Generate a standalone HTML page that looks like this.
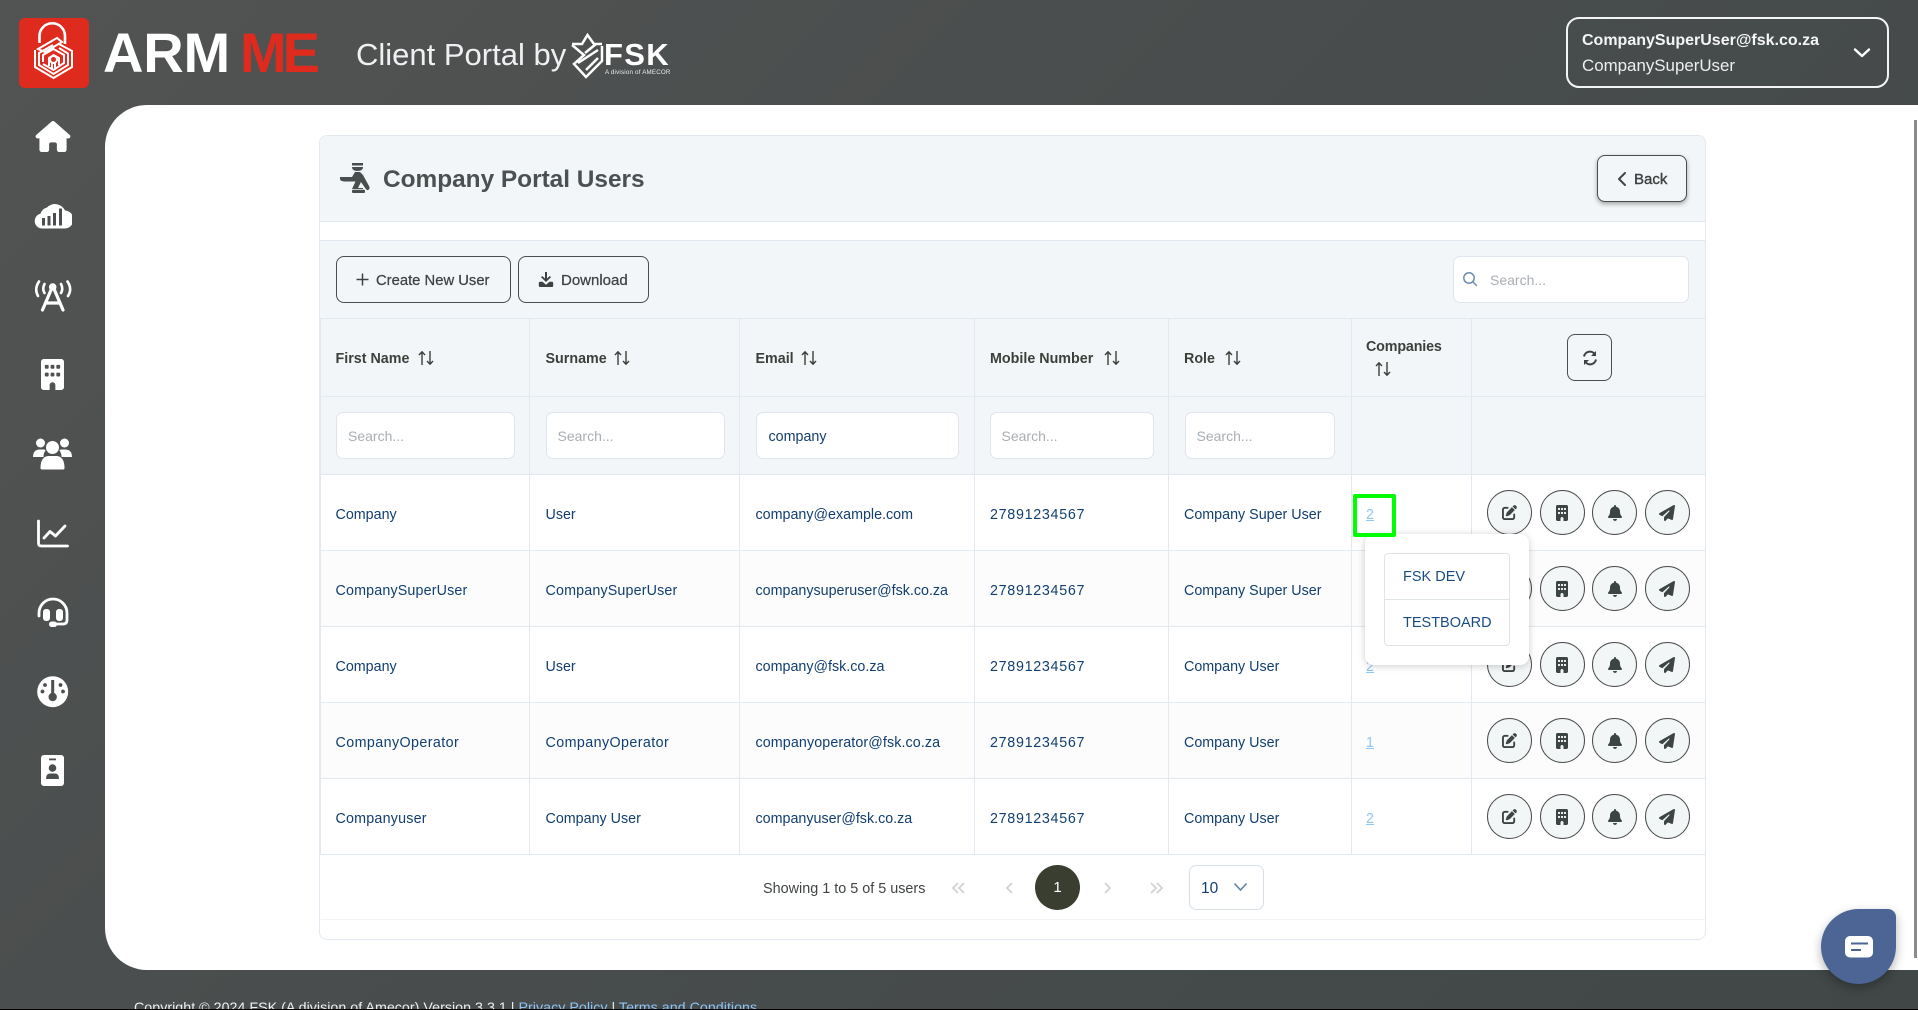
<!DOCTYPE html>
<html lang="en"><head><meta charset="utf-8"><title>Company Portal Users</title>
<style>
*{box-sizing:border-box}
html,body{margin:0;padding:0;width:1918px;height:1010px;overflow:hidden}
body{position:relative;background:linear-gradient(135deg,#525453 0%,#484c4c 50%,#414747 100%);font-family:"Liberation Sans",Arial,sans-serif;color:#3b403f}
.a{position:absolute;white-space:nowrap}
.panel{position:absolute;left:105px;top:105px;width:1813px;height:865px;background:#fff;border-radius:42px 0 0 42px}
.card{position:absolute;left:319px;top:135px;width:1387px;height:805px;background:#fff;border:1px solid #e2e9f0;border-radius:8px;overflow:hidden}
.chead{position:absolute;left:0;top:0;width:100%;height:86px;background:#f3f6f8;border-bottom:1px solid #e2e9f0}
.tbar{position:absolute;left:0;top:104px;width:100%;height:79px;background:#f3f6f8;border-top:1px solid #e2e9f0}
table{position:absolute;left:320px;top:318px;width:1385px;border-collapse:collapse;table-layout:fixed;font-size:14.3px}
td,th{border:1px solid #e2e9f0;padding:0 0 0 15.5px;text-align:left;overflow:visible;white-space:nowrap}
th{background:#f3f6f8;height:78px;font-weight:bold;font-size:14.3px;color:#3b403a;padding-top:2px}
td:first-child,th:first-child{padding-left:14.5px}
td:nth-child(4),th:nth-child(4),td:nth-child(5),th:nth-child(5){padding-left:15px}
td:nth-child(6){padding-left:14px}
tr.f td{background:#f3f6f8;height:78px;padding-top:0}
tr.f td:nth-child(n){padding-left:15.5px}
tr.f td:first-child{padding-left:15px}
tr.f td:nth-child(4){padding-left:14.5px}
tr.r td{height:76px;color:#123f70;padding-top:4px;background:#fff}
tr.r:nth-child(odd) td{background:#fcfcfc}
tr.r td:nth-child(4){letter-spacing:.7px}
tr.r td.n{padding:0 0 0 15px}
td a{color:#8ec5f6;text-decoration:underline}
.ar{display:inline-block;width:16px;height:14px;margin-left:9px;vertical-align:-2px}
.inp{display:block;height:47px;background:#fff;border:1px solid #dfe5ec;border-radius:7px;font-size:14px;color:#a9aeb3;line-height:47px;padding-left:11px}
.inp b{font-weight:normal;font-size:14.3px;color:#123f70}
.acts{display:flex;gap:7.5px;padding-left:0}
.c{width:45px;height:45px;border:1.4px solid #4a4d4c;border-radius:50%;background:#f3f6f7;display:flex;align-items:center;justify-content:center}
.c svg{fill:#3d4444;display:block}
.btn{position:absolute;height:47px;border:1.3px solid #4a4d4c;border-radius:8px;background:#f3f6f8;font-size:15px;color:#3e4342;-webkit-text-stroke:.25px #3e4342}
.btn svg{position:absolute;display:block}
.btn span{position:absolute;top:15px;line-height:18px;white-space:nowrap}
.pop{position:absolute;left:1365px;top:534px;width:164px;height:131px;background:#fff;border-radius:9px;box-shadow:0 1px 8px rgba(0,0,0,.2)}
.pop div.l{position:absolute;left:19px;top:19px;width:126px;height:93px;border:1px solid #dfe4ea;border-radius:4px;font-size:14.500px;color:#1a4c84}
.pop .l span{position:absolute;left:18px}
.green{position:absolute;left:1353px;top:494px;width:43px;height:43px;border:4.5px solid #0f0;border-radius:2px}
</style></head><body>
<svg width="0" height="0" style="position:absolute">
<symbol id="i-sort" viewBox="0 0 16 14"><path d="M4 14V1M1 4L4 .8L7 4M12 0V13M9 10L12 13.200L15 10" fill="none" stroke="#3b403a" stroke-width="1.400"/></symbol>
<symbol id="i-edit" viewBox="0 0 512 512"><path d="M471.600 21.700c-21.900-21.900-57.300-21.900-79.200 0L362.300 51.700l97.900 97.900 30.100-30.100c21.900-21.900 21.900-57.300 0-79.200L471.600 21.700zm-299.200 220c-6.100 6.100-10.800 13.600-13.500 21.900l-29.600 88.800c-2.900 8.600-.6 18.100 5.800 24.600s15.900 8.700 24.600 5.800l88.800-29.600c8.200-2.700 15.700-7.400 21.900-13.500L437.700 172.300 339.700 74.300 172.400 241.700zM96 64C43 64 0 107 0 160V416c0 53 43 96 96 96H352c53 0 96-43 96-96V320c0-17.700-14.300-32-32-32s-32 14.300-32 32v96c0 17.700-14.300 32-32 32H96c-17.700 0-32-14.300-32-32V160c0-17.700 14.300-32 32-32h96c17.700 0 32-14.300 32-32s-14.300-32-32-32H96z"/></symbol>
<symbol id="i-bld" viewBox="0 0 384 512"><path d="M48 0C21.500 0 0 21.500 0 48V464c0 26.500 21.500 48 48 48h96V432c0-26.500 21.500-48 48-48s48 21.500 48 48v80h96c26.500 0 48-21.500 48-48V48c0-26.500-21.500-48-48-48H48zM64 240c0-8.800 7.200-16 16-16h32c8.800 0 16 7.200 16 16v32c0 8.800-7.200 16-16 16H80c-8.800 0-16-7.200-16-16V240zm112-16h32c8.800 0 16 7.200 16 16v32c0 8.800-7.200 16-16 16H176c-8.800 0-16-7.200-16-16V240c0-8.800 7.200-16 16-16zm80 16c0-8.800 7.200-16 16-16h32c8.800 0 16 7.200 16 16v32c0 8.800-7.200 16-16 16H272c-8.800 0-16-7.200-16-16V240zM80 96h32c8.800 0 16 7.200 16 16v32c0 8.800-7.200 16-16 16H80c-8.800 0-16-7.200-16-16V112c0-8.800 7.200-16 16-16zm80 16c0-8.800 7.200-16 16-16h32c8.800 0 16 7.200 16 16v32c0 8.800-7.200 16-16 16H176c-8.800 0-16-7.200-16-16V112zM272 96h32c8.800 0 16 7.200 16 16v32c0 8.800-7.200 16-16 16H272c-8.800 0-16-7.200-16-16V112c0-8.800 7.200-16 16-16z"/></symbol>
<symbol id="i-bell" viewBox="0 0 448 512"><path d="M224 0c-17.700 0-32 14.300-32 32V51.200C119 66 64 130.600 64 208v18.800c0 47-17.300 92.400-48.500 127.600l-7.400 8.300c-8.400 9.400-10.400 22.900-5.300 34.400S19.400 416 32 416H416c12.600 0 24-7.400 29.200-18.900s3.100-25-5.300-34.400l-7.400-8.300C401.300 319.200 384 273.900 384 226.800V208c0-77.400-55-142-128-156.800V32c0-17.700-14.300-32-32-32zm45.300 493.300c12-12 18.700-28.300 18.700-45.300H224 160c0 17 6.700 33.300 18.700 45.300s28.300 18.700 45.300 18.700s33.300-6.700 45.300-18.700z"/></symbol>
<symbol id="i-send" viewBox="0 0 512 512"><path d="M498.100 5.600c10.100 7 15.400 19.100 13.500 31.200l-64 416c-1.500 9.700-7.400 18.200-16 23s-18.900 5.400-28 1.600L284 427.700l-68.500 74.100c-8.900 9.700-22.900 12.900-35.200 8.100S160 493.200 160 480V396.400c0-4 1.500-7.800 4.200-10.700L331.800 202.800c5.800-6.300 5.600-16-.4-22s-15.700-6.400-22-.7L106 360.800 17.700 316.600C7.100 311.300 .3 300.700 0 288.900s5.900-22.800 16.100-28.700l448-256c10.700-6.100 23.900-5.500 34 1.400z"/></symbol>
</svg>

<!-- header logo -->
<svg class="a" style="left:15px;top:15px" width="80" height="76" viewBox="0 0 80 76">
<rect x="4" y="3" width="70" height="70" rx="6" fill="#df2a1e"/>
<g fill="none" stroke="#fff" stroke-width="2" stroke-linejoin="miter">
<path d="M24.500 28V21A12.700 12.700 0 0 1 50 21V29" stroke-width="2.600"/>
<path d="M23 34L42 23L47 27L30 37Z"/>
<path d="M44 29L57 36V52L38.500 63L20 52V35"/>
<path d="M44 33L53 38.500V50L38.500 59L24 50V38L38 30"/>
<path d="M28 47V40L38.500 34L49 40V48L38.500 55L28 49"/>
<path d="M34 51V43L38.500 40L44 43V50"/>
<circle cx="38.500" cy="44.500" r="3.500"/><path d="M37 48V54M40 48V54"/>
</g></svg>
<div class="a" style="left:103px;top:20px;font-weight:bold;font-size:56px;line-height:66px;color:#fff;letter-spacing:-.2px">ARM</div>
<div class="a" style="left:240px;top:20px;font-weight:bold;font-size:56px;line-height:66px;color:#df2a1e;letter-spacing:-4px">ME</div>
<div class="a" style="left:356px;top:36px;font-size:31px;line-height:38px;color:#eef0f2">Client Portal by</div>
<svg class="a" style="left:565px;top:30px" width="44" height="52" viewBox="0 0 44 52">
<g fill="none" stroke="#fff" stroke-width="2.500">
<path d="M7 14H17L22.500 5L29 14H37M7 15L19 25L9 34L21 47L37 31V16"/>
<path d="M20 23L31 14M13 33L33 20M21 40L33 28"/></g>
</svg>
<div class="a" style="left:604px;top:37px;font-weight:bold;font-size:31px;line-height:36px;color:#fff;letter-spacing:1.300px">FSK</div>
<div class="a" style="left:605px;top:68px;font-size:6.200px;line-height:9px;color:#e9ebec;letter-spacing:.2px">A division of AMECOR</div>

<!-- user box -->
<div class="a" style="left:1566px;top:17px;width:323px;height:71px;border:2px solid #f2f4f5;border-radius:13px"></div>
<div class="a" style="left:1582px;top:31px;font-weight:bold;font-size:16px;line-height:20px;color:#f4f5f6">CompanySuperUser@fsk.co.za</div>
<div class="a" style="left:1582px;top:56px;font-size:16.900px;line-height:20px;color:#eceeef">CompanySuperUser</div>
<svg class="a" style="left:1853px;top:46px" width="18" height="14" viewBox="0 0 18 14"><path d="M2 3.500L9 10L16 3.500" fill="none" stroke="#fff" stroke-width="2.400" stroke-linecap="round" stroke-linejoin="round"/></svg>

<!-- sidebar icons -->
<svg class="a" style="left:35px;top:121px" width="36" height="31" viewBox="0 0 576 512" fill="#fff"><path d="M575.8 255.500c0 18-15 32.100-32 32.100h-32l.7 160.200c0 2.700-.2 5.400-.5 8.100V472c0 22.100-17.900 40-40 40H456c-1.100 0-2.200 0-3.300-.1c-1.400 .1-2.800 .1-4.200 .1H416 392c-22.100 0-40-17.900-40-40V448 384c0-17.700-14.300-32-32-32H256c-17.700 0-32 14.300-32 32v64 24c0 22.100-17.900 40-40 40H160 128.100c-1.500 0-3-.1-4.500-.2c-1.200 .1-2.400 .2-3.600 .2H104c-22.100 0-40-17.900-40-40V360c0-.9 0-1.900 .1-2.800V287.600H32c-18 0-32-14-32-32.100c0-9 3-17 10-24L266.400 8c7-7 15-8 22-8s15 2 21 7L564.800 231.500c8 7 12 15 11 24z"/></svg>
<svg class="a" style="left:34px;top:201px" width="38" height="28" viewBox="0 0 38 28"><path d="M8 27.500A7.500 7.500 0 0 1 6.500 12.700A9 9 0 0 1 13 6.500A11 11 0 0 1 31 9.500A8.500 8.500 0 0 1 30 27.500Z" fill="#fff"/><g fill="#4b4e4e"><rect x="8" y="17" width="3" height="7.500"/><rect x="13.500" y="15" width="3" height="9.500"/><rect x="19" y="12" width="3" height="12.500"/><rect x="25" y="7.500" width="3" height="17"/></g></svg>
<svg class="a" style="left:34px;top:279px" width="38" height="33" viewBox="0 0 38 33" fill="none" stroke="#fff" stroke-width="3.200" stroke-linecap="round"><path d="M5 2.500Q0 10 4 17M33.500 2.500Q38.500 10 34 17M10.500 5Q8 10 10.500 14M27 5Q29.500 10 27 14" stroke-width="2.600"/><circle cx="18.700" cy="8" r="3.800" fill="#fff" stroke="none"/><path d="M17 11L8.500 31M20.500 11L29 31M12 24H26"/></svg>
<svg class="a" style="left:41px;top:359px" width="23" height="31" viewBox="0 0 384 512" preserveAspectRatio="none" fill="#fff"><use href="#i-bld"/></svg>
<svg class="a" style="left:33px;top:438px" width="39" height="33" viewBox="0 0 39 33" fill="#fff"><circle cx="7.500" cy="5" r="4.500"/><circle cx="31.500" cy="5" r="4.500"/><path d="M0 19Q0 11.500 7 11.500H11Q12 11.500 12.500 12.500Q10.500 15 10.500 19Z"/><path d="M39 19Q39 11.500 32 11.500H28Q27 11.500 26.500 12.500Q28.500 15 28.500 19Z"/><circle cx="19.500" cy="9.500" r="6.500"/><path d="M7.500 30Q7.500 19 15 18H24Q31.500 19 31.500 30Q31.500 31.500 30 31.500H9Q7.500 31.500 7.500 30Z"/></svg>
<svg class="a" style="left:36px;top:519px" width="34" height="29" viewBox="0 0 34 29" fill="none" stroke="#fff" stroke-width="2.800" stroke-linecap="round" stroke-linejoin="round"><path d="M2.500 2V24Q2.500 27 5.500 27H31.500"/><path d="M8 19L14 12.500L19.500 17L29 7"/></svg>
<svg class="a" style="left:36px;top:596px" width="34" height="33" viewBox="0 0 34 33"><path d="M3 20V17A14 14 0 0 1 31 17V24Q31 28 27 28H18" fill="none" stroke="#fff" stroke-width="2.800" stroke-linecap="round"/><rect x="7" y="13" width="7" height="12" rx="3" fill="#fff"/><rect x="20" y="13" width="7" height="12" rx="3" fill="#fff"/><rect x="13" y="25.500" width="8" height="5.500" rx="2.700" fill="#fff"/></svg>
<svg class="a" style="left:37px;top:676px" width="32" height="32" viewBox="0 0 32 32"><circle cx="15.700" cy="15.700" r="15.500" fill="#fff"/><g fill="#4a4e4e"><rect x="14.200" y="4" width="3" height="14"/><circle cx="15.700" cy="21" r="4.200"/><circle cx="8" cy="9" r="1.900"/><circle cx="23.500" cy="9" r="1.900"/><circle cx="5.500" cy="15.500" r="1.900"/><circle cx="26" cy="15.500" r="1.900"/></g></svg>
<svg class="a" style="left:41px;top:755px" width="23" height="31" viewBox="0 0 23 31"><rect width="23" height="31" rx="3" fill="#fff"/><g fill="#4a4e4e"><rect x="8" y="3.500" width="7" height="1.800"/><circle cx="11.500" cy="13" r="3.800"/><path d="M5 24Q5 18.500 9 18.500H14Q18 18.500 18 24Z"/></g></svg>

<div class="panel"></div>
<div class="card"><div class="chead"></div><div class="tbar"></div></div>

<!-- card header -->
<svg class="a" style="left:339px;top:162px" width="33" height="31" viewBox="0 0 33 31" fill="#484d4d"><path d="M13 1H24V3.500H13ZM13 5H24Q24 9 18.500 9Q13 9 13 5Z"/><path d="M1 15H13L16 10H21L24 13L30 24Q31.500 27 29 28Q27.500 28.500 26.500 26.500L22 20L19 26H24Q24 26 24 27H13L16.500 19.500H5Q1 19 1 17Z"/><rect x="13" y="27.700" width="13" height="3.300" rx="1"/></svg>
<div class="a" style="left:383px;top:164px;font-weight:bold;font-size:24.400px;line-height:32px;color:#4b5050">Company Portal Users</div>
<div class="btn" style="left:1597px;top:155px;width:90px;box-shadow:0 2px 5px rgba(0,0,0,.35)"><svg style="left:19px;top:15px" width="10" height="16" viewBox="0 0 10 16"><path d="M8 2L2 8L8 14" fill="none" stroke="#3e4342" stroke-width="2" stroke-linecap="round" stroke-linejoin="round"/></svg><span style="left:36px;-webkit-text-stroke:.4px #3e4342;font-size:15px">Back</span></div>

<!-- toolbar -->
<div class="btn" style="left:336px;top:256px;width:175px"><svg style="left:19px;top:16px" width="13" height="13" viewBox="0 0 13 13"><path d="M6.500 .5V12.500M.5 6.500H12.500" stroke="#3e4342" stroke-width="1.500"/></svg><span style="left:39px;font-size:14.800px">Create New User</span></div>
<div class="btn" style="left:518px;top:256px;width:131px"><svg style="left:19px;top:15px" width="16" height="16" viewBox="0 0 16 16" fill="#3e4342"><path d="M7 0H9V6.500L11.800 4L13 5.300L8 10L3 5.300L4.200 4L7 6.500Z"/><path d="M.8 11Q.8 9.700 2 9.700H4.600L8 12.700L11.400 9.700H14Q15.200 9.700 15.200 11V14Q15.200 15 14 15H2Q.8 15 .8 14Z"/></svg><span style="left:42px">Download</span></div>
<div class="a" style="left:1453px;top:256px;width:236px;height:47px;background:#fff;border:1px solid #dfe5ec;border-radius:7px"></div>
<svg class="a" style="left:1462px;top:271px" width="16" height="16" viewBox="0 0 16 16" fill="none" stroke="#6f8db0" stroke-width="1.500" stroke-linecap="round"><circle cx="7" cy="7" r="5.200"/><path d="M11 11L14.500 14.500"/></svg>
<div class="a" style="left:1490px;top:271px;font-size:14px;line-height:18px;color:#a9aeb3">Search...</div>

<table>
<colgroup><col style="width:209px"><col style="width:210px"><col style="width:235px"><col style="width:194px"><col style="width:183px"><col style="width:120px"><col style="width:234px"></colgroup>
<thead>
<tr>
<th>First Name<svg class="ar"><use href="#i-sort"/></svg></th>
<th>Surname<svg class="ar" style="margin-left:7.500px"><use href="#i-sort"/></svg></th>
<th>Email<svg class="ar" style="margin-left:7.500px"><use href="#i-sort"/></svg></th>
<th>Mobile Number<svg class="ar" style="margin-left:11px"><use href="#i-sort"/></svg></th>
<th>Role<svg class="ar" style="margin-left:10px"><use href="#i-sort"/></svg></th>
<th style="line-height:24px;padding-left:14px;letter-spacing:-.15px">Companies<br><svg class="ar" style="vertical-align:-1px"><use href="#i-sort"/></svg></th>
<th style="padding:0"><div style="width:45px;height:47px;margin-left:95px;border:1.300px solid #4a4d4c;border-radius:8px;display:flex;align-items:center;justify-content:center"><svg width="16" height="16" viewBox="0 0 16 16" fill="none" stroke="#3e4342" stroke-width="2"><path d="M2 6.500A6 6 0 0 1 13 4.500M14 9.500A6 6 0 0 1 3 11.500"/><path d="M14 1V6H9ZM2 15V10H7Z" fill="#3e4342" stroke="none"/></svg></div></th>
</tr>
</thead>
<tbody>
<tr class="f"><td><div class="inp" style="width:179px">Search...</div></td><td><div class="inp" style="width:179px">Search...</div></td><td><div class="inp" style="width:203px;padding-left:12px"><b>company</b></div></td><td><div class="inp" style="width:164px">Search...</div></td><td><div class="inp" style="width:150px">Search...</div></td><td></td><td></td></tr>
<tr class="r"><td>Company</td><td>User</td><td>company@example.com</td><td>27891234567</td><td>Company Super User</td><td><a>2</a></td><td class="n"><div class="acts"><div class="c"><svg width="15" height="15"><use href="#i-edit"/></svg></div><div class="c"><svg width="12" height="16"><use href="#i-bld"/></svg></div><div class="c"><svg width="14" height="16"><use href="#i-bell"/></svg></div><div class="c"><svg width="16" height="16"><use href="#i-send"/></svg></div></div></td></tr>
<tr class="r"><td style="letter-spacing:.15px">CompanySuperUser</td><td style="letter-spacing:.15px">CompanySuperUser</td><td>companysuperuser@fsk.co.za</td><td>27891234567</td><td>Company Super User</td><td><a>2</a></td><td class="n"><div class="acts"><div class="c"><svg width="15" height="15"><use href="#i-edit"/></svg></div><div class="c"><svg width="12" height="16"><use href="#i-bld"/></svg></div><div class="c"><svg width="14" height="16"><use href="#i-bell"/></svg></div><div class="c"><svg width="16" height="16"><use href="#i-send"/></svg></div></div></td></tr>
<tr class="r"><td>Company</td><td>User</td><td>company@fsk.co.za</td><td>27891234567</td><td>Company User</td><td><a>2</a></td><td class="n"><div class="acts"><div class="c"><svg width="15" height="15"><use href="#i-edit"/></svg></div><div class="c"><svg width="12" height="16"><use href="#i-bld"/></svg></div><div class="c"><svg width="14" height="16"><use href="#i-bell"/></svg></div><div class="c"><svg width="16" height="16"><use href="#i-send"/></svg></div></div></td></tr>
<tr class="r"><td style="letter-spacing:.4px">CompanyOperator</td><td style="letter-spacing:.4px">CompanyOperator</td><td style="letter-spacing:.1px">companyoperator@fsk.co.za</td><td>27891234567</td><td>Company User</td><td><a>1</a></td><td class="n"><div class="acts"><div class="c"><svg width="15" height="15"><use href="#i-edit"/></svg></div><div class="c"><svg width="12" height="16"><use href="#i-bld"/></svg></div><div class="c"><svg width="14" height="16"><use href="#i-bell"/></svg></div><div class="c"><svg width="16" height="16"><use href="#i-send"/></svg></div></div></td></tr>
<tr class="r"><td style="letter-spacing:.2px">Companyuser</td><td>Company User</td><td>companyuser@fsk.co.za</td><td>27891234567</td><td>Company User</td><td><a>2</a></td><td class="n"><div class="acts"><div class="c"><svg width="15" height="15"><use href="#i-edit"/></svg></div><div class="c"><svg width="12" height="16"><use href="#i-bld"/></svg></div><div class="c"><svg width="14" height="16"><use href="#i-bell"/></svg></div><div class="c"><svg width="16" height="16"><use href="#i-send"/></svg></div></div></td></tr>
</tbody></table>

<!-- popover -->
<div class="pop"><div class="l"><span style="top:15px">FSK DEV</span><div style="position:absolute;left:0;right:0;top:45px;height:1px;background:#dfe4ea"></div><span style="top:61px">TESTBOARD</span></div></div>
<div class="green"></div>

<!-- pagination -->
<div class="a" style="left:321px;top:919px;width:1384px;height:1px;background:#f1f3f5"></div>
<div class="a" style="left:763px;top:880px;font-size:14.400px;line-height:18px;color:#404543">Showing 1 to 5 of 5 users</div>
<svg class="a" style="left:952px;top:881px" width="212" height="14" viewBox="0 0 212 14" fill="none" stroke="#cfd1d1" stroke-width="1.700"><path d="M6 2L1 7L6 12M12 2L7 7L12 12M60 2L55 7L60 12M153 2L158 7L153 12M199 2L204 7L199 12M205 2L210 7L205 12"/></svg>
<div class="a" style="left:1035px;top:865px;width:45px;height:45px;border-radius:50%;background:#3a3e30;color:#fff;text-align:center;font-size:15px;line-height:45px">1</div>
<div class="a" style="left:1189px;top:865px;width:75px;height:45px;border:1px solid #d7dfe8;border-radius:7px"></div>
<div class="a" style="left:1201px;top:879px;font-size:15.500px;line-height:20px;color:#123f70">10</div>
<svg class="a" style="left:1233px;top:882px" width="15" height="10" viewBox="0 0 15 10"><path d="M1.500 1.500L7.500 8L13.500 1.500" fill="none" stroke="#5f81a8" stroke-width="1.600"/></svg>

<!-- scrollbar + chat -->
<div class="a" style="left:1914px;top:120px;width:3px;height:838px;background:#8a8a8a"></div>
<div class="a" style="left:1821px;top:909px;width:75px;height:75px;background:#4d6595;border-radius:50% 8px 50% 50%;box-shadow:0 4px 10px rgba(0,0,0,.3)"></div>
<svg class="a" style="left:1845px;top:936px" width="28" height="22" viewBox="0 0 28 22"><rect width="28" height="21.500" rx="5" fill="#fff"/><path d="M6 7.500H23M6 14H16" stroke="#4d6595" stroke-width="2"/></svg>

<!-- footer -->
<div class="a" style="left:134px;top:999px;font-size:14.250px;line-height:18px;color:#eef0f1;letter-spacing:.02px;height:10px;overflow:hidden">Copyright © 2024 FSK (A division of Amecor) Version 3.3.1 | <span style="color:#8ec5f6">Privacy Policy</span> | <span style="color:#8ec5f6">Terms and Conditions</span></div>
<div class="a" style="left:0;top:1009px;width:1918px;height:1px;background:#000"></div>
</body></html>
